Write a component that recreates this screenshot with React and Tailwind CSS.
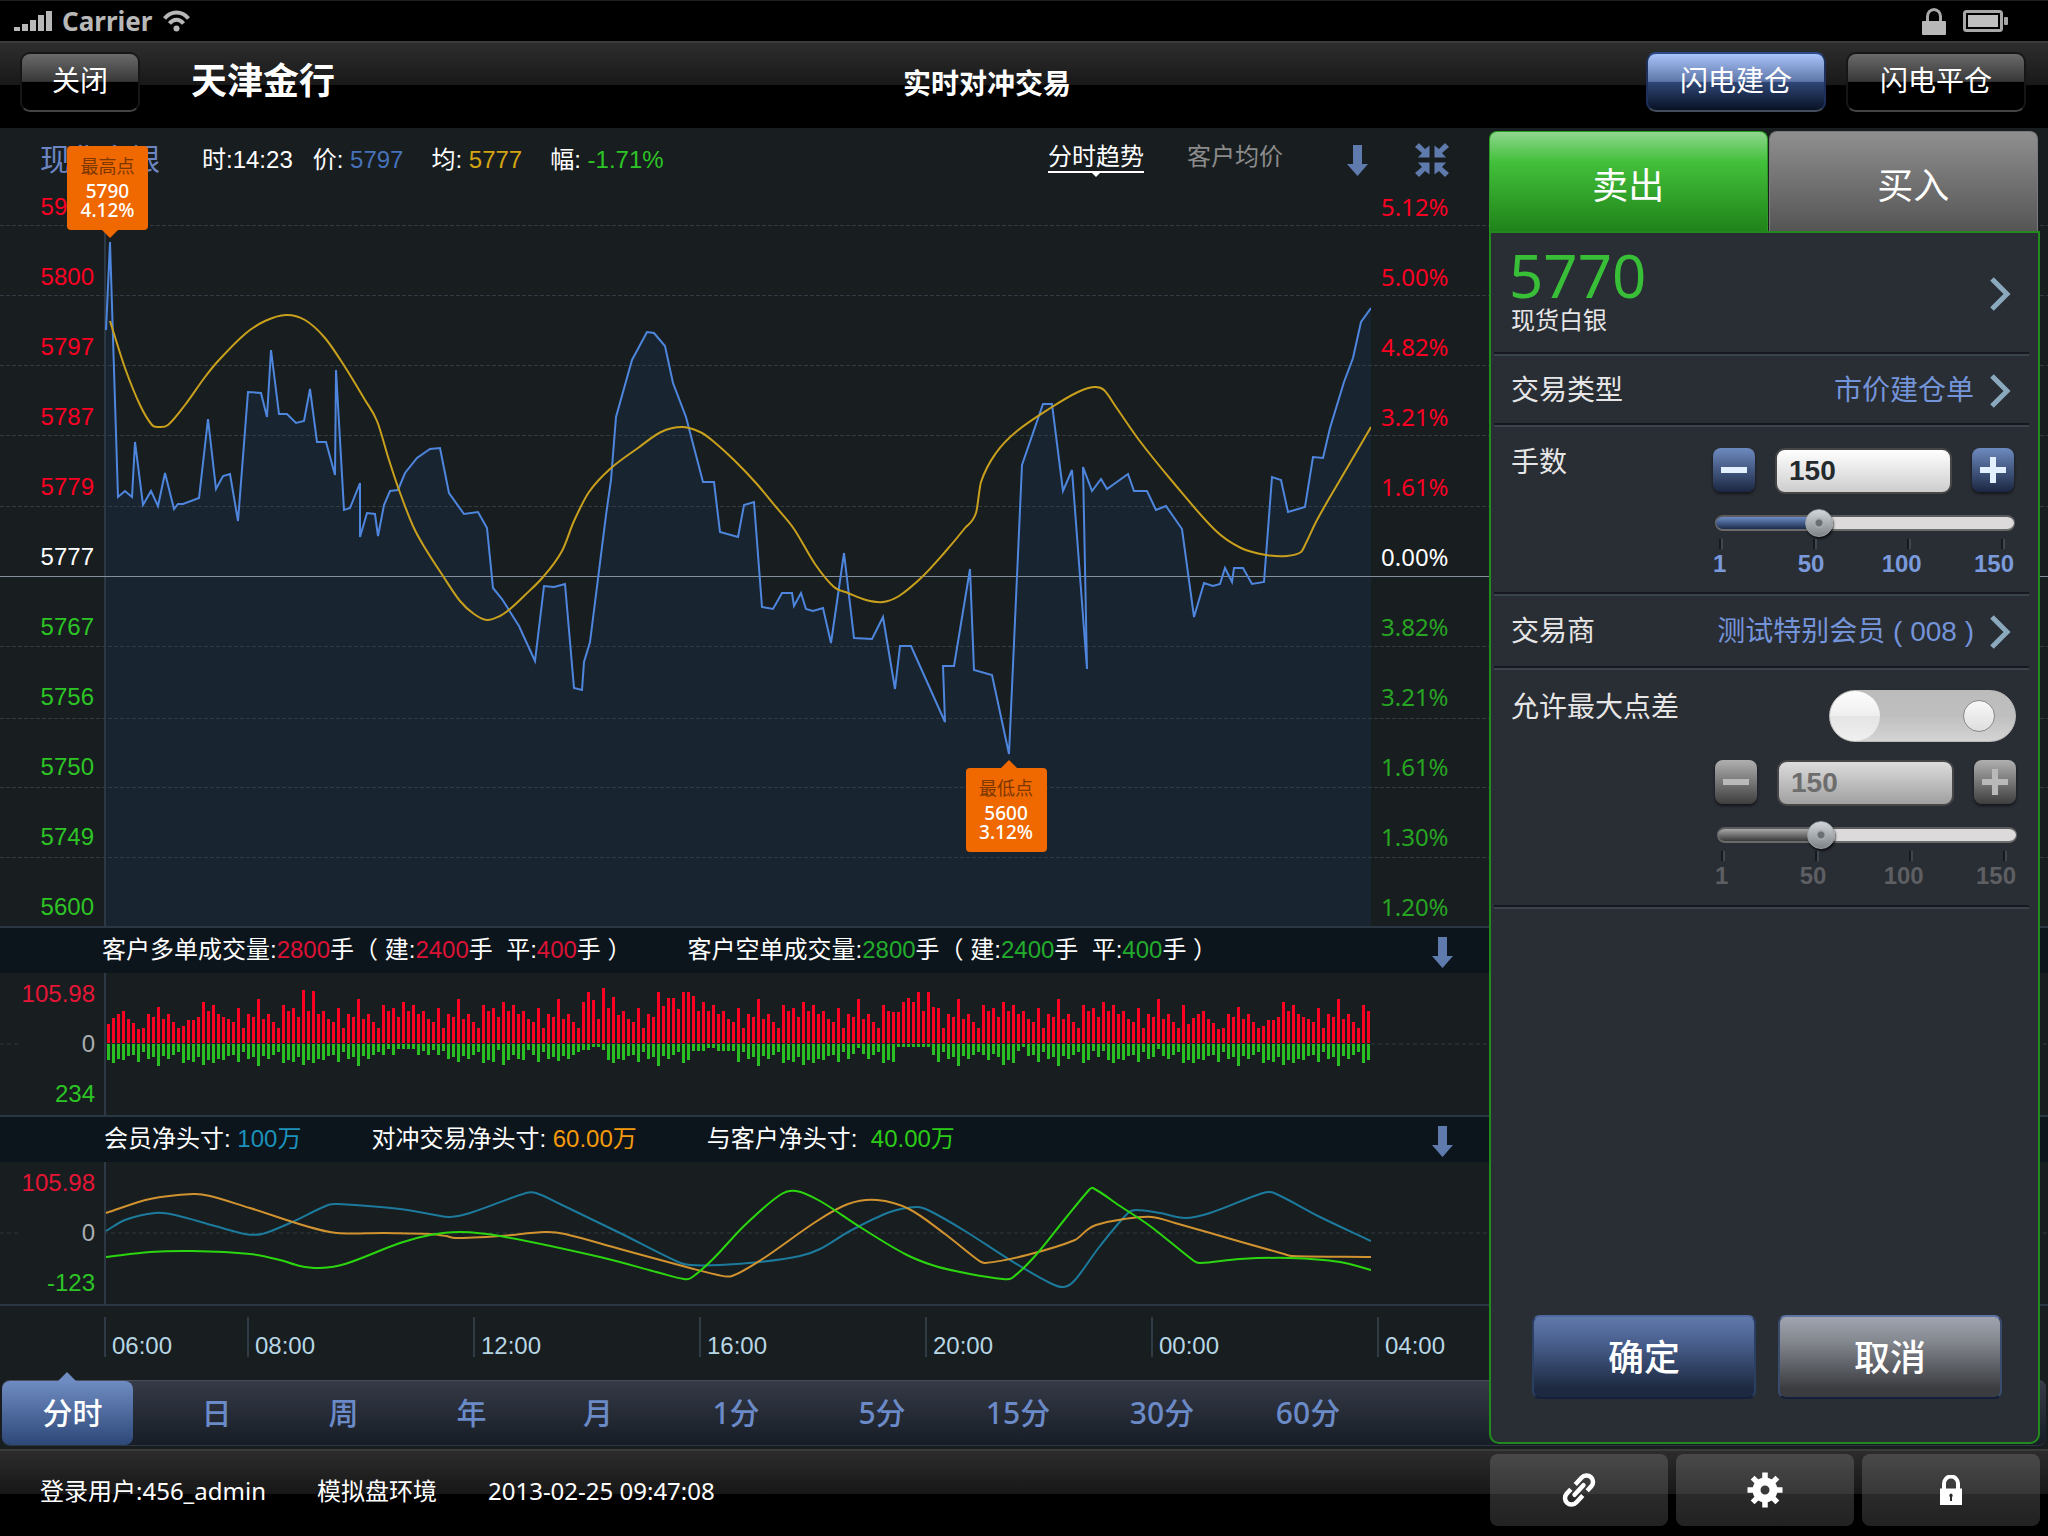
import React, { useState } from "react";

const PRICE = [
  [106, 330], [110, 242], [118, 497], [125, 491], [132, 497], [135, 442], [143, 505], [151, 491], [158, 506],
  [165, 473], [174, 509], [178, 504], [183, 504], [199, 498], [208, 419], [216, 489], [223, 476], [230, 474],
  [238, 521], [248, 392], [261, 393], [267, 417], [271, 350], [279, 414], [287, 414], [296, 423], [304, 421],
  [310, 389], [317, 442], [326, 442], [335, 475], [336, 370], [344, 510], [350, 508], [360, 483], [360, 537],
  [367, 513], [375, 514], [378, 536], [384, 505], [390, 491], [398, 490], [405, 473], [417, 458], [430, 449],
  [440, 448], [449, 493], [464, 514], [478, 512], [487, 528], [493, 588], [502, 599], [519, 626], [535, 661],
  [544, 586], [554, 587], [565, 584], [574, 688], [582, 690], [584, 662], [590, 642], [606, 515], [611, 480],
  [616, 417], [632, 360], [647, 332], [654, 333], [665, 346], [673, 383], [686, 417], [703, 482], [714, 482],
  [720, 532], [738, 537], [744, 505], [754, 502], [762, 607], [773, 609], [782, 593], [792, 593], [794, 606],
  [801, 593], [806, 609], [813, 611], [823, 608], [831, 643], [844, 553], [854, 638], [872, 639], [883, 617],
  [895, 689], [900, 646], [911, 646], [945, 722], [943, 666], [954, 666], [970, 569], [974, 670], [992, 675],
  [1009, 754], [1022, 465], [1043, 404], [1052, 404], [1063, 491], [1072, 470], [1087, 669], [1083, 467],
  [1092, 491], [1101, 479], [1107, 489], [1128, 474], [1134, 491], [1147, 491], [1156, 510], [1166, 506],
  [1182, 529], [1194, 617], [1204, 583], [1213, 586], [1220, 584], [1225, 568], [1232, 582], [1234, 568],
  [1243, 568], [1252, 584], [1264, 582], [1272, 477], [1281, 480], [1288, 512], [1305, 507], [1313, 457],
  [1323, 458], [1330, 428], [1344, 382], [1353, 358], [1361, 322], [1371, 308],
];

const AVERAGE = [
  [110, 321], [125, 368], [140, 405], [152, 425], [158, 427], [168, 425], [185, 405], [205, 377], [219, 360],
  [245, 334], [265, 321], [286, 315], [305, 320], [325, 338], [345, 367], [365, 400], [377, 421], [389, 460],
  [399, 490], [413, 526], [425, 548], [443, 576], [460, 601], [474, 614], [487, 620], [500, 616], [510, 609],
  [524, 596], [544, 576], [562, 551], [574, 521], [589, 492], [610, 469], [638, 448], [661, 432], [682, 427],
  [700, 432], [713, 441], [734, 460], [756, 483], [776, 507], [794, 529], [815, 564], [834, 587], [848, 593],
  [866, 600], [883, 602], [899, 596], [922, 577], [945, 552], [965, 528], [976, 513], [981, 482], [996, 453],
  [1017, 431], [1052, 407], [1078, 392], [1094, 387], [1104, 390], [1116, 407], [1139, 440], [1172, 481],
  [1215, 530], [1241, 548], [1266, 555], [1287, 556], [1301, 552], [1306, 543], [1317, 520], [1340, 480], [1371, 427],
];

const POS_ORANGE = [
  [106, 1213], [150, 1199], [193, 1194], [210, 1196], [250, 1208], [330, 1232], [385, 1233], [430, 1234],
  [446, 1236], [455, 1238], [500, 1236], [545, 1232], [565, 1234], [620, 1249], [690, 1268], [718, 1275],
  [732, 1276], [761, 1260], [817, 1221], [848, 1204], [877, 1200], [909, 1209], [945, 1234], [978, 1260],
  [985, 1263], [1027, 1255], [1075, 1240], [1087, 1230], [1096, 1225], [1124, 1219], [1152, 1217], [1175, 1223],
  [1231, 1239], [1284, 1254], [1292, 1256], [1371, 1257],
];
const POS_BLUE = [
  [106, 1231], [125, 1220], [155, 1213], [175, 1215], [215, 1226], [245, 1234], [262, 1234], [290, 1223],
  [328, 1205], [338, 1204], [400, 1209], [435, 1215], [450, 1217], [470, 1213], [526, 1193], [536, 1193],
  [560, 1204], [620, 1233], [678, 1262], [690, 1265], [720, 1265], [760, 1262], [800, 1256], [820, 1249],
  [850, 1231], [890, 1212], [917, 1207], [930, 1211], [965, 1231], [1010, 1260], [1050, 1283], [1064, 1287],
  [1075, 1280], [1100, 1246], [1128, 1213], [1136, 1210], [1160, 1213], [1185, 1218], [1210, 1213], [1263, 1193],
  [1274, 1193], [1320, 1217], [1371, 1241],
];
const POS_GREEN = [
  [106, 1257], [150, 1252], [192, 1251], [250, 1254], [280, 1260], [300, 1266], [320, 1268], [345, 1264],
  [400, 1243], [430, 1235], [460, 1232], [500, 1236], [600, 1257], [660, 1273], [684, 1279], [691, 1278],
  [712, 1260], [745, 1225], [780, 1195], [796, 1191], [820, 1201], [860, 1227], [905, 1254], [935, 1266],
  [970, 1274], [1003, 1279], [1012, 1278], [1035, 1256], [1065, 1219], [1089, 1190], [1093, 1188], [1120, 1206],
  [1150, 1226], [1194, 1261], [1200, 1263], [1240, 1259], [1290, 1258], [1340, 1262], [1371, 1270],
];

const BUY_VOLUME = [
  19, 25, 29, 32, 24, 20, 14, 15, 29, 26, 36, 24, 29, 21, 15, 17, 23, 23, 26, 41, 32, 38, 29, 26, 24, 21, 35, 15, 29, 26,
  44, 24, 29, 21, 15, 38, 32, 35, 26, 53, 32, 52, 29, 32, 24, 21, 35, 15, 29, 26, 44, 24, 29, 21, 15, 38, 32, 35, 26, 41,
  32, 38, 29, 32, 24, 21, 35, 15, 29, 26, 44, 24, 29, 21, 15, 38, 32,
  35, 26, 41, 32, 38, 29, 32, 24, 21, 35, 15, 29, 26, 44, 24, 29, 21, 15, 41, 51, 43, 24, 55, 35, 46, 28, 32, 24, 21, 35,
  15, 29, 26, 51, 37, 45, 45, 34, 51, 51, 47, 32, 41, 32, 38, 29, 32, 24, 21, 35, 15, 29, 26, 44, 24, 29, 21, 15, 38, 32,
  35, 26, 41, 32, 38, 29, 32, 24, 21, 35, 15, 29, 26, 44, 24, 29, 21, 15, 38, 32, 31, 31, 41, 45, 41, 51, 32, 51,
  36, 35, 15, 29, 26, 44, 24, 29, 21, 15, 38, 32, 35, 26, 41, 32, 38, 29, 32, 24, 21, 35, 15, 29, 26, 44, 24, 29, 21, 15,
  38, 32, 35, 26, 41, 32, 38, 29, 32, 24, 21, 35, 15, 29, 26, 44, 24, 29, 21, 15, 38, 19, 25, 29, 32, 24, 20, 14, 15, 29,
  26, 36, 24, 29, 21, 15, 17, 23, 23, 26, 41, 32, 38, 29, 26, 24, 21, 35, 15, 29, 26, 44, 24, 29, 21, 15, 38, 32,
];
const SELL_VOLUME = [
  16, 19, 15, 16, 12, 11, 18, 8, 15, 13, 22, 12, 15, 11, 8, 19, 16, 18, 13, 21, 16, 19, 15, 16, 12, 11, 18, 8, 15, 13,
  22, 12, 15, 11, 8, 19, 16, 18, 13, 21, 16, 19, 15, 16, 12, 11, 18, 8, 15, 13, 22, 12, 15, 11, 8, 11, 5, 11, 5, 5,
  5, 5, 11, 7, 11, 6, 11, 7, 15, 13, 18, 12, 15, 11, 8, 19, 16,
  18, 6, 21, 16, 11, 15, 16, 6, 11, 18, 8, 15, 13, 17, 12, 15, 11, 8, 6, 6, 3, 3, 6, 16, 19, 15, 16, 12, 11, 18,
  8, 15, 13, 22, 12, 15, 11, 8, 19, 16, 7, 7, 7, 4, 4, 7, 7, 7, 7, 18, 8, 15, 13, 22, 12, 15, 11, 8, 19, 16,
  18, 13, 21, 16, 19, 15, 16, 12, 11, 18, 8, 15, 10, 4, 10, 15, 11, 8, 19, 16, 18, 3, 3, 3, 3, 3, 3, 3,
  11, 18, 8, 15, 13, 22, 12, 15, 11, 8, 11, 16, 10, 13, 21, 16, 19, 7, 3, 12, 11, 18, 8, 15, 13, 22, 12, 15, 11, 8,
  19, 16, 7, 13, 7, 16, 19, 15, 16, 12, 11, 18, 8, 15, 13, 5, 12, 15, 11, 8, 19, 16, 19, 15, 16, 12, 11, 18, 8, 15,
  13, 22, 12, 15, 11, 8, 19, 16, 18, 13, 21, 16, 19, 15, 16, 12, 11, 18, 8, 15, 13, 22, 12, 15, 11, 8, 19, 16,
];

const RED = "text-[#fa0022]";
const GREEN = "text-[#2dc425]";
const PRICE_LABELS = [
  ["5900", RED], ["5800", RED], ["5797", RED], ["5787", RED], ["5779", RED], ["5777", "text-white"],
  ["5767", GREEN], ["5756", GREEN], ["5750", GREEN], ["5749", GREEN], ["5600", GREEN],
];
const DEEP = "text-[#27a522]";
const PERCENT_LABELS = [
  ["5.12%", RED], ["5.00%", RED], ["4.82%", RED], ["3.21%", RED], ["1.61%", RED], ["0.00%", "text-white"],
  ["3.82%", DEEP], ["3.21%", DEEP], ["1.61%", DEEP], ["1.30%", DEEP], ["1.20%", DEEP],
];
const GRID_ROWS = [33, 103, 173, 243, 314, 454, 526, 595, 665];
const TIMES = ["06:00", "08:00", "12:00", "16:00", "20:00", "00:00", "04:00"];
const INTERVALS = ["分时", "日", "周", "年", "月", "1分", "5分", "15分", "30分", "60分"];

const polyline = (pts) => "M" + pts.map((p) => p.join(" ")).join("L");

function smooth(pts) {
  let d = `M${pts[0][0]} ${pts[0][1]}`;
  for (let i = 0; i < pts.length - 1; i++) {
    const a = pts[i - 1] || pts[i];
    const b = pts[i];
    const c = pts[i + 1];
    const e = pts[i + 2] || c;
    // Control points are kept within the segment so uneven spacing does not overshoot.
    const len = c[0] - b[0];
    const s1 = (c[1] - a[1]) / (c[0] - a[0]);
    const s2 = (e[1] - b[1]) / (e[0] - b[0]);
    d += `C${b[0] + len / 3} ${b[1] + (s1 * len) / 3} ${c[0] - len / 3} ${c[1] - (s2 * len) / 3} ${c[0]} ${c[1]}`;
  }
  return d;
}

function DownArrow() {
  return (
    <svg width="21" height="31" viewBox="0 0 21 31" aria-hidden="true">
      <path d="M6 0H15V19H21L10.500 31L0 19H6Z" fill="#5f7bad" />
    </svg>
  );
}

function ShrinkIcon() {
  const arrow = "M4 0L10 6L14.500 2.500V14.500H3L7 10L0 4Z";
  return (
    <svg width="34" height="34" viewBox="0 0 34 34" fill="#5f7bad" aria-hidden="true">
      <path d={arrow} />
      <path d={arrow} transform="translate(34 0) scale(-1 1)" />
      <path d={arrow} transform="translate(0 34) scale(1 -1)" />
      <path d={arrow} transform="translate(34 34) scale(-1 -1)" />
    </svg>
  );
}

function Chevron() {
  return (
    <svg width="22" height="34" viewBox="0 0 22 34" fill="none" stroke="#8aa9bc" strokeWidth="5" aria-hidden="true">
      <path d="M3 2L18 17L3 32" />
    </svg>
  );
}

function StatusBar() {
  return (
    <div className="flex h-[41px] items-center border-t border-[#1d2122] bg-black px-[14px]">
      <svg width="39" height="20" viewBox="0 0 39 20" fill="#b8b8b8" aria-hidden="true">
        <rect x="0" y="16" width="6" height="4" />
        <rect x="8" y="13" width="6" height="7" />
        <rect x="16" y="9" width="6" height="11" />
        <rect x="24" y="4" width="6" height="16" />
        <rect x="32" y="0" width="6" height="20" />
      </svg>
      <span className="ml-[9px] font-['Noto_Sans','Noto_Sans_CJK_SC',sans-serif] text-[26px] leading-[30px] font-bold text-[#b8b8b8]">Carrier</span>
      <svg className="ml-[11px]" width="27" height="22" viewBox="0 0 27 22" fill="none" stroke="#b8b8b8" strokeWidth="4" aria-hidden="true">
        <path d="M1.500 8.500C8 0.500 19 0.500 25.500 8.500" />
        <path d="M6.500 13.500C10.500 8.500 16.500 8.500 20.500 13.500" />
        <ellipse cx="13.500" cy="18.500" rx="3" ry="3" fill="#b8b8b8" stroke="none" />
      </svg>
      <svg className="ml-auto" width="24" height="27" viewBox="0 0 24 27" aria-hidden="true">
        <path d="M5.500 14V8.500a6.500 7 0 0 1 13 0V14" fill="none" stroke="#a8a8a8" strokeWidth="3" />
        <rect x="0" y="13" width="24" height="14" rx="1" fill="#b8b8b8" />
      </svg>
      <svg className="ml-[17px] mr-[25px]" width="46" height="22" viewBox="0 0 46 22" aria-hidden="true">
        <rect x="1.500" y="1.500" width="37" height="19" rx="2" fill="none" stroke="#a8a8a8" strokeWidth="3" />
        <rect x="5" y="5" width="30" height="12" fill="#c0c0c0" />
        <rect x="41" y="7" width="4" height="8" rx="1" fill="#a8a8a8" />
      </svg>
    </div>
  );
}

const DARK_BUTTON =
  "flex h-[60px] items-center justify-center rounded-[10px] border-2 border-t-[#161616] border-x-[#161616] border-b-[#454545] bg-[linear-gradient(#6a6a6a_0%,#383838_49%,#000_50%,#000_100%)] text-[28px] leading-[36px] text-white";
const BLUE_BUTTON =
  "flex h-[60px] items-center justify-center rounded-[10px] border-2 border-t-[#2d4b8a] border-x-[#1d3059] border-b-[#454d5c] bg-[linear-gradient(#a9c4fb_0%,#5f77a8_49%,#2f4776_50%,#091226_100%)] text-[28px] leading-[36px] text-white";

function Header() {
  return (
    <header className="grid h-[87px] grid-cols-[883fr_auto_955fr] items-center border-t-2 border-[#3b3b3b] bg-[linear-gradient(#2d2d2d_0%,#181818_50%,#000_50%)] pr-[22px] pl-5">
      <div className="flex items-center gap-[51px] pb-2">
        <button type="button" className={DARK_BUTTON + " w-[120px]"}>关闭</button>
        <div className="text-4xl leading-[44px] font-bold text-white">天津金行</div>
      </div>
      <h1 className="pb-[2px] text-[28px] leading-[40px] font-bold text-white">实时对冲交易</h1>
      <div className="flex justify-end gap-5 pb-2">
        <button type="button" className={BLUE_BUTTON + " w-[180px]"}>闪电建仓</button>
        <button type="button" className={DARK_BUTTON + " w-[180px]"}>闪电平仓</button>
      </div>
    </header>
  );
}

function Marker({ title, value, percent }) {
  return (
    <div className="flex h-[84px] w-[81px] flex-col items-center rounded-[4px] bg-[#ef6800] pt-[8px] font-['Noto_Sans','Noto_Sans_CJK_SC',sans-serif] text-white">
      <span className="text-[18px] leading-[24px] text-[#7d3700]">{title}</span>
      <span className="mt-[4px] text-[19px] leading-[19px] font-medium">{value}</span>
      <span className="text-[19px] leading-[19px] font-medium">{percent}</span>
    </div>
  );
}

function PriceHeader() {
  return (
    <div className="flex h-16 items-center pr-[41px] pl-10 text-2xl leading-[32px] text-white">
      <span className="text-[30px] text-[#6d86c2]">现货白银</span>
      <span className="ml-[42px]">时:14:23</span>
      <span className="ml-5">价: <span className="text-[#4672b8]">5797</span></span>
      <span className="ml-7">均: <span className="text-[#d3a411]">5777</span></span>
      <span className="ml-7">幅: <span className={GREEN}>-1.71%</span></span>
      <div className="mr-[64px] ml-auto flex gap-[43px] leading-[28px]">
        <button type="button" className="flex flex-col items-center">
          <span className="border-b-2 border-white">分时趋势</span>
          <span className="h-0 w-0 border-x-4 border-t-4 border-x-transparent border-t-white" />
        </button>
        <button type="button" className="pb-[6px] text-[#8b8b8b]">客户均价</button>
      </div>
      <button type="button" aria-label="下移" className="mr-[47px]"><DownArrow /></button>
      <button type="button" aria-label="收缩"><ShrinkIcon /></button>
    </div>
  );
}

function AxisColumn({ items, className }) {
  return (
    <div className={"flex flex-col justify-between text-2xl leading-[30px] " + className}>
      {items.map(([t, c], i) => (
        <span key={i} className={c}>{t}</span>
      ))}
    </div>
  );
}

function PriceChart() {
  const line = polyline(PRICE);
  return (
    <section className="border-b-2 border-[#2a3641]">
      <div className="pr-[558px]"><PriceHeader /></div>
      <div className="relative flex h-[734px] pr-[558px]">
        <div className="flex min-w-0 flex-1">
          <AxisColumn items={PRICE_LABELS} className="w-[104px] items-end pr-[10px] pb-1" />
          <div className="relative min-w-0 flex-1">
            <svg className="block h-full w-full" viewBox="104 192 1267 734" preserveAspectRatio="none" aria-label="价格走势">
              <path d={line + "L1371 926L106 926Z"} fill="#192431" />
              <path d="M105 232V926" stroke="#2c3945" strokeWidth="2" />
            </svg>
          </div>
          <AxisColumn items={PERCENT_LABELS} className="w-[119px] pb-1 pl-[10px] font-['Noto_Sans','Noto_Sans_CJK_SC',sans-serif]" />
        </div>
        <svg className="absolute inset-0 h-full w-full" aria-hidden="true">
          {GRID_ROWS.map((y) => (
            <line key={y} x1="0" x2="100%" y1={y + 0.5} y2={y + 0.5} stroke="#303b43" strokeDasharray="4 2" />
          ))}
          <line x1="0" x2="100%" y1="384.500" y2="384.500" stroke="#84919c" />
        </svg>
        <div className="absolute inset-y-0 right-[677px] left-[104px]">
          <svg className="block h-full w-full" viewBox="104 192 1267 734" preserveAspectRatio="none" fill="none" aria-hidden="true">
            <path d={line} stroke="#4e86dd" strokeWidth="2" />
            <path d={smooth(AVERAGE)} stroke="#c8a01c" strokeWidth="2" />
          </svg>
          <div className="absolute -top-[46px] -left-[37px]">
            <Marker title="最高点" value="5790" percent="4.12%" />
            <div className="ml-[35px] h-0 w-0 border-x-8 border-t-8 border-x-transparent border-t-[#ef6800]" />
          </div>
          <div className="absolute top-[568px] left-[68%]">
            <div className="ml-[35px] h-0 w-0 border-x-8 border-b-8 border-x-transparent border-b-[#ef6800]" />
            <Marker title="最低点" value="5600" percent="3.12%" />
          </div>
        </div>
      </div>
    </section>
  );
}

function Strip({ children, className }) {
  return (
    <div className="flex h-[45px] items-center bg-[#0d151c] pr-[595px] text-2xl leading-[32px] text-white">
      <div className={"flex pb-[2px] whitespace-pre " + className}>{children}</div>
      <button type="button" aria-label="展开" className="ml-auto pt-1"><DownArrow /></button>
    </div>
  );
}

function SubChart({ labels, label, children }) {
  return (
    <div className="relative flex h-[142px] pr-[558px]">
      <svg className="absolute inset-0 h-full w-full" aria-hidden="true">
        <line x1="0" x2="20" y1="71" y2="71" stroke="#303638" strokeDasharray="4 3" />
        <line x1="104" x2="100%" y1="71" y2="71" stroke="#303a40" strokeDasharray="4 3" />
      </svg>
      <AxisColumn items={labels} className="w-[104px] items-end py-[6px] pr-[9px]" />
      <svg className="relative h-full min-w-0 flex-1" viewBox="0 0 1267 142" preserveAspectRatio="none" fill="none" aria-label={label}>
        <path d="M1 0V142" stroke="#2c3945" strokeWidth="2" />
        {children}
      </svg>
      <div className="w-[119px]" />
    </div>
  );
}

function Volume({ label, total, open, close, tone }) {
  return (
    <span>
      {label}:<span className={tone}>{total}</span>手（ 建:<span className={tone}>{open}</span>手{"  "}平:<span className={tone}>{close}</span>手 ）
    </span>
  );
}

function ChartArea() {
  const [active, setActive] = useState(0);
  return (
    <div className="col-span-2 col-start-1 row-start-1 flex flex-col pb-[2px]">
      <PriceChart />
      <section className="border-b-2 border-[#2a3641]">
        <Strip className="gap-[56px] pl-[102px]">
          <Volume label="客户多单成交量" total="2800" open="2400" close="400" tone="text-[#dc1235]" />
          <Volume label="客户空单成交量" total="2800" open="2400" close="400" tone="text-[#23ab2d]" />
        </Strip>
        <SubChart label="成交量" labels={[["105.98", "text-[#e41535]"], ["0", "text-[#a9aeb2]"], ["234", GREEN]]}>
          {BUY_VOLUME.map((h, i) => (
            <rect key={i} x={3 + i * 5} y={70 - h} width="3" height={h} fill="#fa0022" />
          ))}
          {SELL_VOLUME.map((h, i) => (
            <rect key={i} x={3 + i * 5} y="71" width="3" height={h} fill="#2abf22" />
          ))}
        </SubChart>
      </section>
      <section className="border-b-2 border-[#2a3641]">
        <Strip className="gap-[70px] pl-[104px]">
          <span>会员净头寸: <span className="text-[#1c91ba]">100万</span></span>
          <span>对冲交易净头寸: <span className="text-[#f39a0c]">60.00万</span></span>
          <span>与客户净头寸:  <span className="text-[#2bcb17]">40.00万</span></span>
        </Strip>
        <SubChart label="净头寸" labels={[["105.98", "text-[#e41535]"], ["0", "text-[#a9aeb2]"], ["-123", GREEN]]}>
          <g transform="translate(-104 -1162)" strokeWidth="2">
            <path d={smooth(POS_BLUE)} stroke="#1c7a9c" />
            <path d={smooth(POS_ORANGE)} stroke="#d1932f" />
            <path d={smooth(POS_GREEN)} stroke="#2bd60e" />
          </g>
        </SubChart>
      </section>
      <div className="pr-[558px]">
        <div className="grid h-[74px] grid-cols-[143fr_226fr_226fr_226fr_226fr_226fr_113fr] items-start pt-[11px] pl-[104px]">
          {TIMES.map((t) => (
            <div key={t} className="h-[40px] border-l-2 border-[#2f3b44] pt-[13px] pl-[6px] text-2xl leading-[32px] text-[#b7d6e4]">{t}</div>
          ))}
        </div>
      </div>
      <div className="mx-[2px] rounded-lg border-y border-t-[#474d59] border-b-[#30363f] bg-[linear-gradient(#353a46,#171d26)] pr-[556px]">
        <nav className="grid h-16 grid-cols-[131fr_20fr_127fr_127fr_129fr_124fr_152fr_140fr_132fr_156fr_136fr_114fr] font-['Noto_Sans','Noto_Sans_CJK_SC',sans-serif]">
          {INTERVALS.map((t, i) => (
            <button
              key={t}
              type="button"
              onClick={() => setActive(i)}
              className={
                "relative text-[30px] leading-[40px] font-medium " +
                (i === 0 ? "pl-[10px] " : "") +
                (i === 1 ? "col-start-3 " : "") +
                (i === active
                  ? "rounded-lg bg-[linear-gradient(#6f8cc2,#2d4778)] text-white"
                  : "text-[#6b8ac8]")
              }
            >
              {t}
              {i === active && (
                <span className="absolute -top-[9px] left-1/2 -ml-[10px] h-0 w-0 border-x-[9px] border-b-[9px] border-x-transparent border-b-[#6f8cc2]" />
              )}
            </button>
          ))}
        </nav>
      </div>
    </div>
  );
}

const TRACK =
  "h-4 w-[300px] appearance-none rounded-full border-y-2 border-x border-t-[#5c5c5c] border-b-[#6b6b6b] border-x-[#6b6b6b] bg-[length:34%_100%,100%_100%] bg-no-repeat [&::-webkit-slider-thumb]:h-7 [&::-webkit-slider-thumb]:w-7 [&::-webkit-slider-thumb]:appearance-none [&::-webkit-slider-thumb]:rounded-full [&::-webkit-slider-thumb]:border [&::-webkit-slider-thumb]:border-[#9aa0a4] [&::-webkit-slider-thumb]:bg-[radial-gradient(circle_at_center,#6a6f73_0px,#6a6f73_3px,#a8adb0_4px,transparent_6px),linear-gradient(#d2d6da,#7e8488)] [&::-webkit-slider-thumb]:shadow-[1px_2px_2px_#00000099] ";

function Stepper({ label, disabled }) {
  const [value, setValue] = useState(50);
  const box = disabled
    ? "bg-[linear-gradient(#b0b0b0,#3e3e3e)] text-[#b9b9b9]"
    : "bg-[linear-gradient(#6d8abf,#1b2742)] text-[#e3f0ff]";
  const btn = "flex h-[44px] w-[42px] items-center justify-center rounded-lg shadow-[0_2px_3px_#0008] " + box;
  return (
    <div className="flex w-[301px] flex-col">
      <div className="flex justify-between">
        <button type="button" aria-label="减少" disabled={disabled} className={btn}>
          <svg width="26" height="26" viewBox="0 0 26 26" fill="currentColor" aria-hidden="true"><path d="M0 10H26V16H0Z" /></svg>
        </button>
        <input
          type="text"
          aria-label={label}
          defaultValue="150"
          disabled={disabled}
          className={
            "h-[46px] w-[177px] rounded-[10px] border-2 border-[#474747] pl-3 text-[28px] leading-[32px] font-bold " +
            (disabled ? "bg-[linear-gradient(#dcdcdc,#a0a0a0)] text-[#6d6d6d]" : "bg-[linear-gradient(#fff,#cdcdcd)] text-[#24292d]")
          }
        />
        <button type="button" aria-label="增加" disabled={disabled} className={btn}>
          <svg width="26" height="26" viewBox="0 0 26 26" fill="currentColor" aria-hidden="true"><path d="M10 0H16V10H26V16H16V26H10V16H0V10H10Z" /></svg>
        </button>
      </div>
      <input
        type="range"
        min="1"
        max="150"
        value={value}
        disabled={disabled}
        onChange={(e) => setValue(Number(e.target.value))}
        aria-label={label + "滑块"}
        className={
          TRACK +
          "mt-[21px] ml-[2px] " +
          (disabled
            ? "bg-[linear-gradient(#a8a8a8,#3a3a3a),linear-gradient(#dcdada,#dcdada)]"
            : "bg-[linear-gradient(#6c8cc6,#1d2c4c),linear-gradient(#dcdada,#dcdada)]")
        }
      />
      <div className="mt-2 ml-[6px] flex w-[286px] justify-between" aria-hidden="true">
        {[0, 1, 2, 3].map((n) => (
          <span key={n} className="h-[10px] w-1 border-x-2 border-l-[#15191d] border-r-[#41474e]" />
        ))}
      </div>
      <div className={"flex justify-between text-2xl leading-[30px] font-bold " + (disabled ? "text-[#5d5f62]" : "text-[#7a9adb]")}>
        <span>1</span>
        <span className="pl-[19px]">50</span>
        <span className="pl-[5px]">100</span>
        <span>150</span>
      </div>
    </div>
  );
}

const DIVIDED = "mr-[9px] ml-[3px] border-b-2 border-[#3a434c] shadow-[inset_0_-2px_0_#15191f] pl-[17px] ";

function OrderPanel() {
  return (
    <aside className="z-10 col-start-2 row-start-1 flex flex-col pt-[3px] pr-[8px] pb-1">
      <div className="grid h-[100px] grid-cols-[278fr_269fr] gap-px pr-[2px]">
        <button type="button" className="rounded-t-lg border border-b-0 border-[#2b9a25] bg-[linear-gradient(#8fd68e_0%,#43c03b_30%,#1f8319_100%)] pt-[10px] text-4xl leading-[48px] text-white">
          卖出
        </button>
        <button type="button" className="rounded-t-lg border border-b-0 border-[#7a7a7a] bg-[linear-gradient(#8f8f8f,#555)] pt-[10px] pl-5 text-4xl leading-[48px] text-white">
          买入
        </button>
      </div>
      <div className="flex flex-1 flex-col rounded-b-[10px] border-2 border-[#228a1c] bg-[#292d34] text-[28px] leading-[36px] text-[#e6e6e6]">
        <button type="button" className={DIVIDED + "flex h-[123px] items-center justify-between pr-[18px] text-left"}>
          <span className="-ml-1 flex flex-col pb-[6px] pl-[2px]">
            <span className="font-['Noto_Sans','Noto_Sans_CJK_SC',sans-serif] text-6xl leading-[60px] text-[#38be37]">5770</span>
            <span className="pl-[2px] text-2xl leading-[32px]">现货白银</span>
          </span>
          <Chevron />
        </button>
        <button type="button" className={DIVIDED + "flex h-[71px] items-center justify-between pr-[18px]"}>
          <span>交易类型</span>
          <span className="flex items-center gap-[15px] text-[#7494d9]">市价建仓单<Chevron /></span>
        </button>
        <div className={DIVIDED + "flex h-[169px] justify-between pt-[21px] pr-[15px]"}>
          <span className="-mt-[3px]">手数</span>
          <Stepper label="手数" />
        </div>
        <button type="button" className={DIVIDED + "flex h-[74px] items-center justify-between pr-[18px]"}>
          <span>交易商</span>
          <span className="flex items-center gap-[15px] text-[#7494d9]"><span>测试特别会员 ( 008 )</span><Chevron /></span>
        </button>
        <div className={DIVIDED + "h-[239px] pt-[20px] pr-[13px]"}>
          <label className="flex cursor-pointer justify-between">
            <span>允许最大点差</span>
            <span className="relative flex h-[52px] w-[187px] items-center justify-between rounded-full border border-[#b9b9b9] bg-[linear-gradient(#bcbcbc,#bfbfbf_50%,#d4d4d4)] pr-5">
              <input type="checkbox" role="switch" className="sr-only" />
              <span className="h-[50px] w-[50px] rounded-full bg-[linear-gradient(#fdfdfd,#efefef_50%,#e4e4e4_50%,#f0f0f0)]" />
              <span className="h-8 w-8 rounded-full border border-[#8a8a8a] bg-[linear-gradient(#f8f8f8,#dedede)]" />
            </span>
          </label>
          <div className="mt-[18px] flex justify-end">
            <Stepper label="最大点差" disabled />
          </div>
        </div>
        <div className="mt-auto mb-[43px] flex justify-center gap-[22px] pl-[5px]">
          <button type="button" className="flex h-[84px] w-[224px] items-center justify-center rounded-lg border-2 border-t-[#4f68a0] border-x-[#2b3f63] border-b-[#14203a] bg-[linear-gradient(#6079ab,#4a6190_30%,#1c2940_90%)] pt-1 text-4xl leading-[48px] font-medium text-white">
            确定
          </button>
          <button type="button" className="flex h-[84px] w-[224px] items-center justify-center rounded-lg border-2 border-t-[#5d74a4] border-x-[#3a4c6c] border-b-[#14203a] bg-[linear-gradient(#a0a4b0,#84888f_30%,#3a3c40_90%)] pt-1 text-4xl leading-[48px] font-medium text-white">
            取消
          </button>
        </div>
      </div>
    </aside>
  );
}

function LinkIcon() {
  return (
    <svg width="36" height="36" viewBox="0 0 36 36" fill="none" stroke="#fff" strokeWidth="4.500" aria-hidden="true">
      <g transform="rotate(-47 18 18)">
        <path d="M19.500 11.500H29a6.500 6.500 0 0 1 0 13H23" />
        <path d="M16.500 24.500H7a6.500 6.500 0 0 1 0-13H13" />
        <path d="M11.500 18H24.500" strokeLinecap="round" />
      </g>
    </svg>
  );
}

function GearIcon() {
  return (
    <svg width="36" height="36" viewBox="0 0 36 36" fill="none" stroke="#fff" aria-hidden="true">
      <circle cx="18" cy="18" r="8.500" strokeWidth="8" />
      {[0, 45, 90, 135].map((a) => (
        <path key={a} d="M18 0.500V8M18 28V35.500" strokeWidth="5.500" transform={`rotate(${a} 18 18)`} />
      ))}
    </svg>
  );
}

function LockIcon() {
  return (
    <svg width="22" height="30" viewBox="0 0 22 30" aria-hidden="true">
      <path d="M4 15V8.500a7 7 0 0 1 14 0V15" fill="none" stroke="#fff" strokeWidth="4" />
      <path d="M0 13.500H22V30H0Z" fill="#fff" />
      <path d="M11 18.500a2 2 0 0 1 1 3.500V26H10V22A2 2 0 0 1 11 18.500Z" fill="#2a2a2a" />
    </svg>
  );
}

function Footer() {
  const btn =
    "flex h-[72px] items-center justify-center rounded-lg bg-[linear-gradient(#494949_0%,#373737_55%,#2a2a2a_55%,#222_100%)]";
  return (
    <footer className="flex h-[87px] items-start border-t-2 border-[#3b3b3b] bg-[linear-gradient(#2c2c2c_0%,#171717_51%,#000_51%)] pl-10 font-['Noto_Sans','Noto_Sans_CJK_SC',sans-serif] text-2xl leading-[32px] text-white">
      <div className="mt-[24px] flex gap-[51px]">
        <span>登录用户:456_admin</span>
        <span>模拟盘环境</span>
        <span>2013-02-25 09:47:08</span>
      </div>
      <div className="mt-[3px] mr-[8px] ml-auto grid w-[550px] grid-cols-3 gap-2">
        <button type="button" aria-label="链接" className={btn}><LinkIcon /></button>
        <button type="button" aria-label="设置" className={btn}><GearIcon /></button>
        <button type="button" aria-label="锁定" className={btn}><LockIcon /></button>
      </div>
    </footer>
  );
}

export default function App() {
  return (
    <div className="flex min-h-screen flex-col bg-black font-['Liberation_Sans','Noto_Sans_CJK_SC',sans-serif]">
      <StatusBar />
      <Header />
      <main className="grid grid-cols-[minmax(0,1fr)_559px] bg-[#181d20] pb-px">
        <ChartArea />
        <OrderPanel />
      </main>
      <Footer />
    </div>
  );
}
